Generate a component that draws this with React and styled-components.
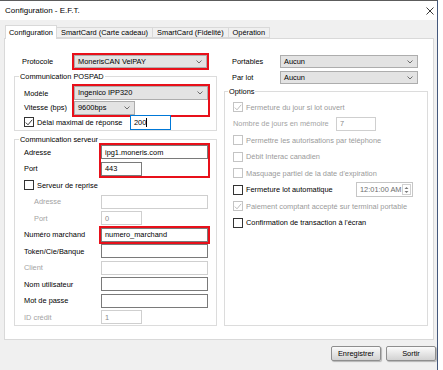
import React from 'react'
import styled, { createGlobalStyle } from 'styled-components'

const GlobalStyle = createGlobalStyle`
  * { box-sizing: border-box; }
  body {
    margin: 0;
    background: #fff;
    font-family: "Liberation Sans", Arial, sans-serif;
    font-size: 7.4px;
    color: #000;
  }
`

const Window = styled.div`
  width: 438px;
  height: 370px;
  display: flex;
  flex-direction: column;
  background: #f0f0f0;
  border-top: 1px solid #5c5c5c;
  border-right: 1px solid #44587c;
`

const TitleBar = styled.div`
  height: 19px;
  flex: none;
  background: #fff;
  display: flex;
  align-items: center;
  justify-content: space-between;
  padding: 0 3px 0 5px;
`

const Title = styled.span`
  font-size: 8px;
`

const TabStrip = styled.div`
  height: 18px;
  flex: none;
  display: flex;
  align-items: flex-end;
  padding-left: 5px;
`

const Tab = styled.div`
  position: relative;
  z-index: 1;
  height: ${p => (p.$active ? '14px' : '11px')};
  margin-bottom: ${p => (p.$active ? '-1px' : '0')};
  padding: 0 ${p => (p.$active ? '3px' : '4px')};
  display: flex;
  align-items: center;
  background: ${p => (p.$active ? '#fff' : '#f0f0f0')};
  border: 1px solid #d9d9d9;
  border-bottom: ${p => (p.$active ? 'none' : '1px solid #d9d9d9')};
  border-left: ${p => (p.$first ? '1px solid #d9d9d9' : 'none')};
  white-space: nowrap;
`

const Panel = styled.div`
  height: 302px;
  flex: none;
  margin: 0 3px 0 4px;
  background: #fff;
  border: 1px solid #d9d9d9;
  padding: 16px 5px 0 9px;
  display: grid;
  grid-template-columns: 203px 204px;
  column-gap: 7px;
  align-items: stretch;
  align-content: start;
`

const Column = styled.div`
  display: flex;
  flex-direction: column;
`

const FieldRow = styled.div`
  display: flex;
  align-items: center;
  height: 13px;
  padding-left: 8px;
  margin-top: ${p => p.$mt || 0}px;
`

const Label = styled.span`
  flex: none;
  width: ${p => (p.$w ? `${p.$w}px` : 'auto')};
  padding-left: ${p => p.$indent || 0}px;
  color: ${p => (p.$disabled ? '#a3a3a3' : '#000')};
  white-space: nowrap;
`

const Highlight = styled.div`
  outline: 2px solid #e8101a;
  display: flex;
  flex-direction: column;
  gap: ${p => p.$gap || 0}px;
  grid-row: ${p => p.$rows || 'auto'};
`

const SelectBox = styled.div`
  width: ${p => p.$w}px;
  height: ${p => p.$h || 14}px;
  flex: none;
  display: flex;
  align-items: center;
  justify-content: space-between;
  padding: 0 4px 0 3px;
  background: #e3e3e3;
  border: 1px solid #adadad;
`

const Group = styled.fieldset`
  margin: ${p => p.$mt || 0}px 0 0 0;
  padding: 0;
  min-width: 0;
  border: 1px solid #dcdcdc;
  flex: ${p => (p.$grow ? 1 : 'none')};
`

const Legend = styled.legend`
  padding: 0 1px;
  margin-left: ${p => p.$ml}px;
  line-height: 9px;
  font-size: 7.4px;
`

const GroupGrid = styled.div`
  display: grid;
  grid-template-columns: ${p => p.$cols};
  grid-auto-rows: ${p => p.$row}px;
  row-gap: ${p => p.$gap}px;
  align-items: center;
  padding: ${p => p.$pad};
`

const OptionList = styled.div`
  display: flex;
  flex-direction: column;
  gap: 2.5px;
  padding: 4.5px 8px 0 8px;
`

const Line = styled.div`
  display: flex;
  align-items: center;
  height: ${p => p.$h || 14}px;
  grid-column: 1 / -1;
`

const Input = styled.div`
  width: ${p => (p.$w ? `${p.$w}px` : '100%')};
  height: ${p => p.$h || 14}px;
  flex: none;
  display: flex;
  align-items: center;
  padding-left: 3px;
  background: #fff;
  border: 1px solid ${p => (p.$focus ? '#0078d7' : p.$disabled ? '#cfcfcf' : '#7a7a7a')};
  color: ${p => (p.$disabled ? '#8a8a8a' : '#000')};
  white-space: nowrap;
`

const Caret = styled.span`
  display: inline-block;
  width: 1px;
  height: 9px;
  background: #000;
`

const CheckRow = styled.label`
  display: flex;
  align-items: center;
  width: ${p => (p.$w ? `${p.$w}px` : 'auto')};
  flex: none;
  color: ${p => (p.$disabled ? '#9a9a9a' : '#000')};
  white-space: nowrap;
`

const Box = styled.span`
  width: 10px;
  height: 10px;
  flex: none;
  margin-right: 3px;
  display: flex;
  align-items: center;
  justify-content: center;
  background: #fff;
  border: 1px solid ${p => (p.$disabled ? '#c4c4c4' : '#333')};
`

const TimeBox = styled.div`
  width: 57px;
  height: 15px;
  flex: none;
  display: flex;
  align-items: center;
  justify-content: space-between;
  padding: 0 1px 0 3px;
  border: 1px solid #c6c6c6;
  color: #6d6d6d;
`

const Spin = styled.div`
  width: 9px;
  height: 11px;
  border: 1px solid #d0d0d0;
  display: flex;
  align-items: center;
  justify-content: center;
`

const Footer = styled.div`
  flex: 1;
  display: flex;
  justify-content: flex-end;
  align-items: flex-start;
  gap: 5px;
  padding: 6px 1px 0 0;
`

const Button = styled.button`
  width: 50px;
  height: 15px;
  padding: 0;
  font-family: inherit;
  font-size: 7.4px;
  color: #000;
  border: 1px solid #8e8e8e;
  border-radius: 2px;
  background: linear-gradient(#fbfbfb, #e6e6e6 50%, #d2d2d2);
  box-shadow: 1px 1px 1px rgba(0, 0, 0, 0.25);
`

const Chevron = () => (
  <svg width="6" height="4" viewBox="0 0 6 4">
    <polyline points="0.5,0.5 3,3 5.5,0.5" fill="none" stroke="#606060" strokeWidth="0.9" />
  </svg>
)

const Select = ({ w, h, children }) => (
  <SelectBox $w={w} $h={h}>
    <span>{children}</span>
    <Chevron />
  </SelectBox>
)

const Check = ({ checked, disabled, width, children }) => (
  <CheckRow $disabled={disabled} $w={width}>
    <Box $disabled={disabled}>
      {checked && (
        <svg width="8" height="7" viewBox="0 0 8 7">
          <polyline points="0.8,3.6 3,5.8 7.2,0.8" fill="none" stroke={disabled ? '#b4b4b4' : '#222'} strokeWidth="0.9" />
        </svg>
      )}
    </Box>
    {children}
  </CheckRow>
)

export default function App() {
  return (
    <>
      <GlobalStyle />
      <Window>
        <TitleBar>
          <Title>Configuration - E.F.T.</Title>
          <svg width="8" height="8" viewBox="0 0 8 8">
            <path d="M0.5 0.5 L7.5 7.5 M7.5 0.5 L0.5 7.5" stroke="#222" strokeWidth="0.9" />
          </svg>
        </TitleBar>

        <TabStrip>
          <Tab $active $first>Configuration</Tab>
          <Tab>SmartCard (Carte cadeau)</Tab>
          <Tab>SmartCard (Fidelité)</Tab>
          <Tab>Opération</Tab>
        </TabStrip>

        <Panel>
          <Column>
            <FieldRow>
              <Label $w={52}>Protocole</Label>
              <Highlight>
                <Select w={133} h={13}>MonerisCAN VelPAY</Select>
              </Highlight>
            </FieldRow>

            <Group $mt={3.5}>
              <Legend $ml={4}>Communication POSPAD</Legend>
              <GroupGrid $cols="50px 134px" $row={14} $gap={0} $pad="5.5px 8px 2px 9px">
                <Label>Modèle</Label>
                <Highlight $rows="span 2" $gap={1}>
                  <Select w={134}>Ingenico IPP320</Select>
                  <Select w={61}>9600bps</Select>
                </Highlight>
                <Label>Vitesse (bps)</Label>
                <Line $h={15} style={{ marginTop: 2 }}>
                  <Check checked width={106}>Délai maximal de réponse</Check>
                  <Input $w={41} $h={15} $focus>200<Caret /></Input>
                </Line>
              </GroupGrid>
            </Group>

            <Group $mt={3.5}>
              <Legend $ml={4}>Communication serveur</Legend>
              <GroupGrid $cols="77px 107px" $row={14} $gap={2.5} $pad="1.5px 8px 1px 9px">
                <Label>Adresse</Label>
                <Highlight $rows="span 2" $gap={2.5}>
                  <Input>ipg1.moneris.com</Input>
                  <Input $w={41}>443</Input>
                </Highlight>
                <Label>Port</Label>
                <Line>
                  <Check>Serveur de reprise</Check>
                </Line>
                <Label $indent={10} $disabled>Adresse</Label>
                <Input $disabled />
                <Label $indent={10} $disabled>Port</Label>
                <Input $w={41} $disabled>0</Input>
                <Label>Numéro marchand</Label>
                <Highlight>
                  <Input>numero_marchand</Input>
                </Highlight>
                <Label>Token/Cie/Banque</Label>
                <Input />
                <Label $disabled>Client</Label>
                <Input $disabled />
                <Label>Nom utilisateur</Label>
                <Input />
                <Label>Mot de passe</Label>
                <Input />
                <Label $disabled>ID crédit</Label>
                <Input $w={41} $disabled>1</Input>
              </GroupGrid>
            </Group>
          </Column>

          <Column>
            <FieldRow>
              <Label $w={48}>Portables</Label>
              <Select w={138} h={13}>Aucun</Select>
            </FieldRow>
            <FieldRow $mt={3}>
              <Label $w={48}>Par lot</Label>
              <Select w={138} h={13}>Aucun</Select>
            </FieldRow>

            <Group $mt={2.5} $grow>
              <Legend $ml={3}>Options</Legend>
              <OptionList>
                <Line><Check checked disabled>Fermeture du jour si lot ouvert</Check></Line>
                <Line>
                  <Label $w={103} $disabled>Nombre de jours en mémoire</Label>
                  <Input $w={40} $disabled>7</Input>
                </Line>
                <Line><Check disabled>Permettre les autorisations par téléphone</Check></Line>
                <Line><Check disabled>Débit Interac canadien</Check></Line>
                <Line><Check disabled>Masquage partiel de la date d'expiration</Check></Line>
                <Line>
                  <Check width={123}>Fermeture lot automatique</Check>
                  <TimeBox>
                    <span>12:01:00 AM</span>
                    <Spin>
                      <svg width="5" height="8" viewBox="0 0 5 8">
                        <path d="M0.5 3 L2.5 1 L4.5 3 Z M0.5 5 L2.5 7 L4.5 5 Z" fill="#7a7a7a" />
                      </svg>
                    </Spin>
                  </TimeBox>
                </Line>
                <Line><Check checked disabled>Paiement comptant accepté sur terminal portable</Check></Line>
                <Line><Check>Confirmation de transaction à l'écran</Check></Line>
              </OptionList>
            </Group>
          </Column>
        </Panel>

        <Footer>
          <Button>Enregistrer</Button>
          <Button>Sortir</Button>
        </Footer>
      </Window>
    </>
  )
}
